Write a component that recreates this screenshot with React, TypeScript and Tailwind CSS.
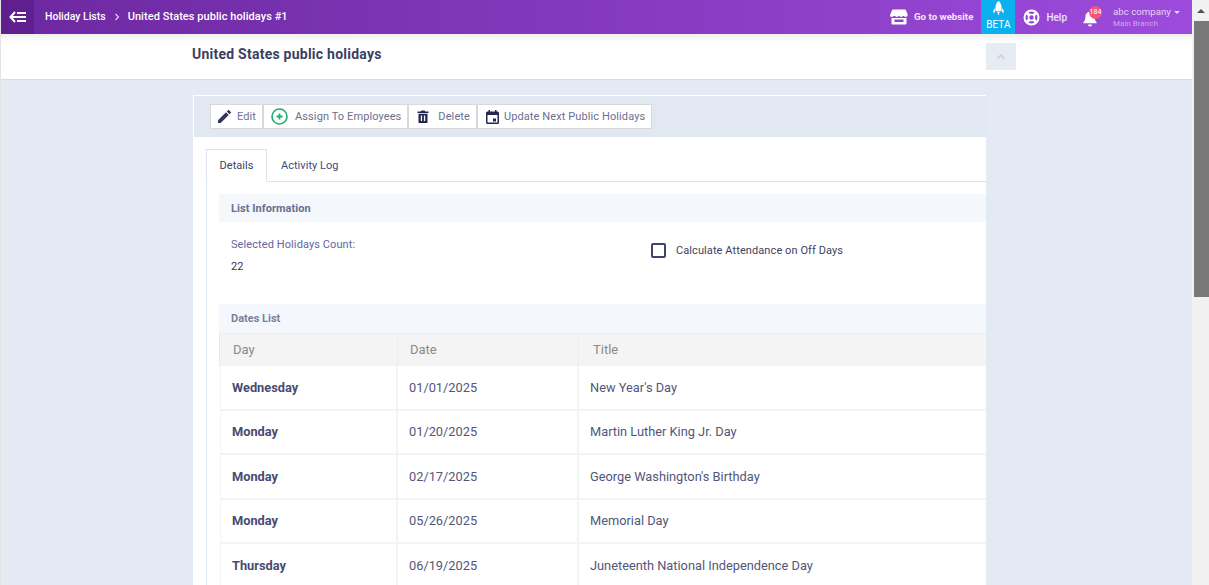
const holidays = [
  { day: "Wednesday", date: "01/01/2025", title: "New Year's Day" },
  { day: "Monday", date: "01/20/2025", title: "Martin Luther King Jr. Day" },
  { day: "Monday", date: "02/17/2025", title: "George Washington's Birthday" },
  { day: "Monday", date: "05/26/2025", title: "Memorial Day" },
  { day: "Thursday", date: "06/19/2025", title: "Juneteenth National Independence Day" },
];

function Store() {
  return (
    <svg width="18" height="16" viewBox="0 0 18 16" fill="#fff">
      <path d="M3 0.500h12a1 1 0 0 1 1 .7l1.600 4.100c.3 1.600-.9 2.600-2 2.600-.9 0-1.600-.4-2.100-1.100-.5.7-1.300 1.100-2.200 1.100s-1.800-.4-2.300-1.100c-.5.7-1.300 1.100-2.200 1.100s-1.700-.4-2.200-1.100C3.100 7.500 2.400 7.900 1.500 7.900.4 7.900-.8 6.900.4 5.300L2 1.200a1 1 0 0 1 1-.7z" />
      <path d="M1.500 9h15v5.500a1 1 0 0 1-1 1h-13a1 1 0 0 1-1-1V9zm3 1.500v2.500h9v-2.500h-9z" fillRule="evenodd" />
    </svg>
  );
}

function Rocket() {
  return (
    <svg width="11" height="15" viewBox="0 0 10 14" fill="#fff">
      <path d="M5 0c1.800 1.500 2.800 3.500 2.800 5.500v4H2.200v-4C2.200 3.500 3.200 1.500 5 0z" />
      <path d="M1.800 6.500v3.600l-1.500 1.500V8.500zM8.200 6.500v3.600l1.500 1.500V8.500zM3.800 10h2.400L5 13.500z" />
    </svg>
  );
}

function LifeRing() {
  return (
    <svg width="17" height="17" viewBox="0 0 17 17" fill="none" stroke="#fff">
      <circle cx="8.500" cy="8.500" r="7" strokeWidth="2" />
      <circle cx="8.500" cy="8.500" r="3" strokeWidth="1.500" />
      <path d="M3.500 3.500l3 3M13.500 3.500l-3 3M3.500 13.500l3-3M13.500 13.500l-3-3" strokeWidth="3" />
    </svg>
  );
}

function Bell() {
  return (
    <svg width="16" height="17" viewBox="0 0 16 17" fill="#fff">
      <path d="M8 1c.7 0 1.100.5 1.100 1.100 2.300.5 3.500 2.400 3.500 4.700 0 3 .8 4.400 2.100 5.600v.8H1.300v-.8c1.300-1.200 2.100-2.600 2.100-5.600 0-2.300 1.200-4.200 3.500-4.700C6.900 1.500 7.300 1 8 1z" />
      <path d="M6 14.500h4a2 2 0 0 1-4 0z" />
    </svg>
  );
}

function ActionButton({ icon, label, spacing }: { icon: React.ReactNode; label: string; spacing: string }) {
  return (
    <button className={`h-[25px] flex items-center border border-[#d9d9d9] bg-white text-[11px] tracking-[0.1px] text-[#6b6f91] ${spacing}`}>
      {icon}
      <span className="pt-[1px]">{label}</span>
    </button>
  );
}

export default function App() {
  return (
    <div className="flex h-[585px] w-[1209px] overflow-hidden bg-[#e4eaf3] font-['Roboto',sans-serif]">
      <div className="w-[1192px] flex flex-col border-l border-[#e4e4e4] min-w-0">
        {/* Top bar */}
        <header className="h-[34px] shrink-0 flex items-center bg-gradient-to-r from-[#6c28a0] to-[#9d4bdc] text-white">
          <button className="w-[33px] h-full flex items-center justify-center bg-[#5f1f8f]">
            <svg width="17" height="12" viewBox="0 0 17 12" fill="none" stroke="#fff" strokeWidth="2">
              <path d="M6 1L1.500 6 6 11M2 6h15M8 2h9M8 10h9" />
            </svg>
          </button>
          <div className="ml-[11px] flex items-center font-medium">
            <span className="text-[10.500px]">Holiday Lists</span>
            <svg className="mx-[8px]" width="6" height="8" viewBox="0 0 6 8" fill="none" stroke="#e2cdf2" strokeWidth="1.200">
              <path d="M1.500 1l3 3-3 3" />
            </svg>
            <span className="text-[11px] tracking-[0.06px]">United States public holidays #1</span>
          </div>
          <div className="ml-auto flex items-center h-full">
            <div className="flex items-center gap-[6px]">
              <Store />
              <span className="text-[9.700px] font-bold text-[#f3e6fb]">Go to website</span>
            </div>
            <div className="ml-[8px] w-[34px] h-full bg-[#0cb0ee] flex flex-col items-center pt-[1px]">
              <Rocket />
              <span className="text-[10px] leading-[10px] mt-[4px]">BETA</span>
            </div>
            <div className="ml-[8px] flex items-center gap-[6px]">
              <LifeRing />
              <span className="text-[10px] font-medium text-[#f0e2fa]">Help</span>
            </div>
            <div className="relative ml-[15px] mt-[2px]">
              <Bell />
              <span className="absolute -top-[4px] left-[7px] h-[13px] w-[13px] rounded-full bg-[#f2557d] text-[7px] leading-[13px] text-center">
                184
              </span>
            </div>
            <div className="ml-[15px] w-[79px] pt-[1px]">
              <div className="text-[9.700px] leading-[12px] text-[#e6d3f5] flex items-center gap-[3px]">
                abc company
                <span className="border-x-[3px] border-t-[3px] border-x-transparent border-t-[#e6d3f5]" />
              </div>
              <div className="text-[8px] leading-[11px] tracking-[0.02px] text-[#cfa8ec]">Main Branch</div>
            </div>
          </div>
        </header>

        {/* Page title */}
        <div className="h-[46px] shrink-0 bg-white border-b border-[#d8dde5] flex items-start pl-[191px] relative">
          <div className="absolute inset-x-0 top-0 h-[8px] bg-gradient-to-b from-[#efefef] to-white" />
          <h1 className="relative mt-[11px] text-[14px] leading-[18px] font-bold tracking-[0.24px] text-[#3b3f63]">
            United States public holidays
          </h1>
          <button className="relative ml-auto mr-[176px] mt-[9px] w-[30px] h-[27px] bg-[#e6ecf4] flex items-center justify-center">
            <svg width="8" height="5" viewBox="0 0 8 5" fill="none" stroke="#d2d2d2" strokeWidth="1.800">
              <path d="M0.500 4.500L4 1l3.500 3.500" />
            </svg>
          </button>
        </div>

        {/* Card */}
        <div className="mt-[15px] ml-[192px] w-[793px] flex-1 border-l border-t border-white bg-white min-h-0">
          <div className="h-[41px] bg-[#e2e8f1] pt-[8px] pl-[16px] flex">
            <ActionButton
              spacing="pl-[7px] pr-[6px] gap-[6px]"
              icon={
                <svg width="13" height="13" viewBox="3 3 18 18" fill="#33375a">
                  <path d="M3 17.250V21h3.750L17.810 9.940l-3.750-3.750L3 17.250zM20.710 7.040c.39-.39.39-1.020 0-1.410l-2.340-2.340c-.39-.39-1.020-.39-1.410 0l-1.830 1.830 3.750 3.750 1.830-1.830z" />
                </svg>
              }
              label="Edit"
            />
            <ActionButton
              spacing="pl-[7px] pr-[6px] gap-[7px]"
              icon={
                <svg width="17" height="17" viewBox="0 0 17 17" fill="none" stroke="#1fae74">
                  <circle cx="8.500" cy="8.500" r="7.500" strokeWidth="1.600" />
                  <path d="M8.500 5.500v6M5.500 8.500h6" strokeWidth="1.800" />
                </svg>
              }
              label="Assign To Employees"
            />
            <ActionButton
              spacing="pl-[8px] pr-[6px] gap-[9px]"
              icon={
                <svg width="12" height="13" viewBox="0 0 12 13" fill="#24284f">
                  <path d="M0.500 1.500h3.200L4.500 .5h3l.8 1h3.200v1.500H.5zM1.500 3.800h9V13h-9zM3.800 5.500v5.500h1.300V5.500zm3.100 0v5.500h1.300V5.500z" fillRule="evenodd" />
                </svg>
              }
              label="Delete"
            />
            <ActionButton
              spacing="pl-[8px] pr-[6px] gap-[5px]"
              icon={
                <svg width="13" height="14" viewBox="0 0 13 14" fill="#24284f">
                  <path d="M2.500 0h1.500v1.500h5V0h1.500v1.500h1a1.500 1.500 0 0 1 1.500 1.500v9.500a1.500 1.500 0 0 1-1.500 1.500h-10A1.500 1.500 0 0 1 0 12.500V3a1.500 1.500 0 0 1 1.500-1.500h1zM1.500 5v7.500h10V5zM7 8.500h3v3H7z" fillRule="evenodd" />
                </svg>
              }
              label="Update Next Public Holidays"
            />
          </div>

          <div className="pl-[12px] pt-[12px]">
            {/* Tabs */}
            <div className="flex h-[33px] border-b border-[#dfe3e8] text-[11px] tracking-[0.03px]">
              <div className="w-[61px] h-[33px] pt-[1px] border border-b-white border-[#dfe3e8] flex items-center justify-center text-[#3b3f63]">
                Details
              </div>
              <div className="ml-[14px] pt-[2px] flex items-center text-[#45497a]">Activity Log</div>
            </div>

            <div className="border-l border-[#e2e8f1] pl-[12px] pt-[12px]">
              <div className="h-[28px] pt-[2px] bg-[#f4f7fb] pl-[12px] flex items-center text-[11px] tracking-[0.05px] font-bold text-[#6b6f91]">
                List Information
              </div>
              <div className="h-[82px] flex pl-[12px] text-[11px] tracking-[0.09px]">
                <div className="w-[420px] pt-[16px]">
                  <div className="leading-[14px] text-[#6266a0]">Selected Holidays Count:</div>
                  <div className="mt-[8px] leading-[14px] text-[#33375a]">22</div>
                </div>
                <div className="flex items-start pt-[21px]">
                  <span className="w-[15px] h-[15px] rounded-[2px] border-2 border-[#3f4370] bg-white" />
                  <span className="ml-[10px] mt-[1px] leading-[14px] text-[#3b3f63]">
                    Calculate Attendance on Off Days
                  </span>
                </div>
              </div>
              <div className="h-[29px] pt-[1px] bg-[#f4f7fb] pl-[12px] flex items-center text-[11px] font-bold text-[#7b7f9e]">
                Dates List
              </div>

              {/* Dates table */}
              <div className="grid grid-cols-[178px_181px_1fr] h-[33px] bg-[#f4f4f4] border-t border-[#eceef1] border-l border-l-[#e8e8e8] text-[13px] text-[#8a8a8a]">
                <div className="pl-[13px] flex items-center border-r border-[#eeeeee]">Day</div>
                <div className="pl-[12px] flex items-center border-r border-[#eeeeee]">Date</div>
                <div className="pl-[14px] flex items-center">Title</div>
              </div>
              {holidays.map((h) => (
                <div
                  key={h.date}
                  className="grid grid-cols-[177px_181px_1fr] ml-[1px] h-[44.500px] border-b-2 border-[#f4f4f4] border-l border-l-[#f4f4f4] text-[12.800px] text-[#53567a]"
                >
                  <div className="pl-[11px] flex items-center border-r-2 border-[#f4f4f4] font-bold text-[#484c70]">{h.day}</div>
                  <div className="pl-[11px] flex items-center border-r-2 border-[#f4f4f4]">{h.date}</div>
                  <div className="pl-[11px] flex items-center">{h.title}</div>
                </div>
              ))}
            </div>
          </div>
        </div>
      </div>

      {/* Scrollbar */}
      <div className="w-[17px] shrink-0 bg-[#f1f1f1] flex flex-col items-center">
        <div className="h-[21px] flex items-center justify-center">
          <span className="border-x-[4px] border-b-[4px] border-x-transparent border-b-[#505050]" />
        </div>
        <div className="ml-[2px] w-[15px] h-[276px] bg-[#787878]" />
      </div>
    </div>
  );
}
